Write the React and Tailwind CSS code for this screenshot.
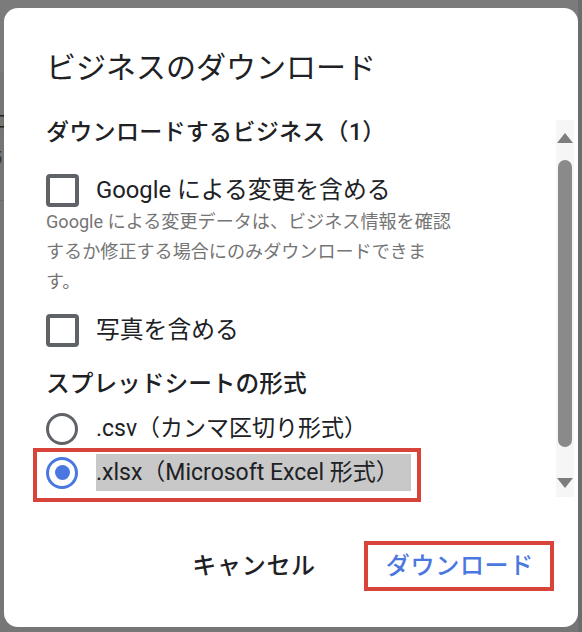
import React from "react";

const font = { fontFamily: "Roboto, 'Noto Sans CJK JP', sans-serif" };

function Checkbox({ label }) {
  return (
    <div className="flex items-center h-[33px]">
      <div className="w-[33px] h-[33px] rounded-[4px] border-[4px] border-[#5f6368] shrink-0" />
      <span className="ml-[17px] text-[23.8px] leading-[33px] text-[#202124]">{label}</span>
    </div>
  );
}

function Radio({ checked }) {
  return checked ? (
    <div className="w-[32px] h-[32px] rounded-full border-[3px] border-[#4a78e0] flex items-center justify-center shrink-0">
      <div className="w-[15px] h-[15px] rounded-full bg-[#4a78e0]" />
    </div>
  ) : (
    <div className="w-[32px] h-[32px] rounded-full border-[3px] border-[#5f6368] shrink-0" />
  );
}

export default function App() {
  return (
    <div className="relative w-[582px] h-[632px] bg-[#767676] overflow-hidden" style={font}>
      {/* page beneath the overlay */}
      <div className="absolute left-0 top-0 w-[582px] h-[72px] bg-[#7b7b7b]" />
      <div className="absolute left-0 top-[200px] w-[582px] h-[1px] bg-[#6a6a6a]" />
      <div className="absolute left-[-10px] top-[108px] text-[18px] text-[#222]">ロ</div>
      <div className="absolute left-[-8px] top-[144px] text-[18px] text-[#333]">5</div>
      <div className="absolute right-0 top-0 w-[4px] h-[632px] bg-[#6c6c6c]" />

      {/* dialog */}
      <div className="absolute left-[4px] top-[8px] w-[574px] h-[619px] rounded-[14px] bg-white flex flex-col">
        <div className="mt-[40px] ml-[42px] h-[40px] text-[30px] leading-[40px] text-[#202124]">
          ビジネスのダウンロード
        </div>

        <div className="mt-[29px] flex">
          <div className="flex-1 pl-[42px]">
            <div className="h-[32px] text-[23px] leading-[32px] tracking-[0.3px] font-medium text-[#202124]">
              ダウンロードするビジネス（1）
            </div>
            <div className="mt-[25px]">
              <Checkbox label="Google による変更を含める" />
            </div>
            <div className="text-[18.1px] leading-[30px] text-[#757575]">
              Google による変更データは、ビジネス情報を確認
              <br />
              するか修正する場合にのみダウンロードできま
              <br />
              す。
            </div>
            <div className="mt-[17px]">
              <Checkbox label="写真を含める" />
            </div>
            <div className="mt-[21px] h-[32px] text-[23.7px] leading-[32px] font-medium text-[#202124]">
              スプレッドシートの形式
            </div>
            <div className="mt-[11px] flex items-center h-[36px]">
              <Radio />
              <span className="ml-[18px] text-[23px] leading-[36px] text-[#202124]">.csv（カンマ区切り形式）</span>
            </div>
            <div className="relative mt-[7px] flex items-center h-[37px]">
              <Radio checked />
              <span className="ml-[18px] w-[315px] h-[37px] bg-[#c8c8c8] text-[23px] leading-[37px] text-[#202124] whitespace-nowrap">
                .xlsx（Microsoft Excel 形式）
              </span>
              <div className="absolute left-[-13px] top-[-6px] w-[388px] h-[54px] border-[4px] border-[#d8433a] pointer-events-none" />
            </div>
          </div>

          {/* scrollbar */}
          <div className="mt-[3px] mr-[4px] w-[18px] h-[377px] bg-[#f6f6f6] flex flex-col items-center">
            <svg className="mt-[13px]" width="16" height="10" viewBox="0 0 16 10">
              <path d="M8 0 L16 10 L0 10 Z" fill="#7d7d7d" />
            </svg>
            <div className="mt-[17px] w-[14px] h-[287px] rounded-full bg-[#8a8a8a]" />
            <svg className="mt-[31px]" width="16" height="10" viewBox="0 0 16 10">
              <path d="M0 0 L16 0 L8 10 Z" fill="#7d7d7d" />
            </svg>
          </div>
        </div>

        <div className="mt-auto mb-[36px] mr-[24px] flex justify-end items-center gap-[26px]">
          <button className="h-[48px] px-[22px] text-[24px] tracking-[0.7px] font-medium text-[#202124]">キャンセル</button>
          <button className="relative h-[50px] pl-[22px] pr-[20px] text-[24px] tracking-[0.7px] font-medium text-[#4a78e0]">
            ダウンロード
            <span className="absolute inset-0 border-[4px] border-[#d8433a] pointer-events-none" />
          </button>
        </div>
      </div>
    </div>
  );
}
